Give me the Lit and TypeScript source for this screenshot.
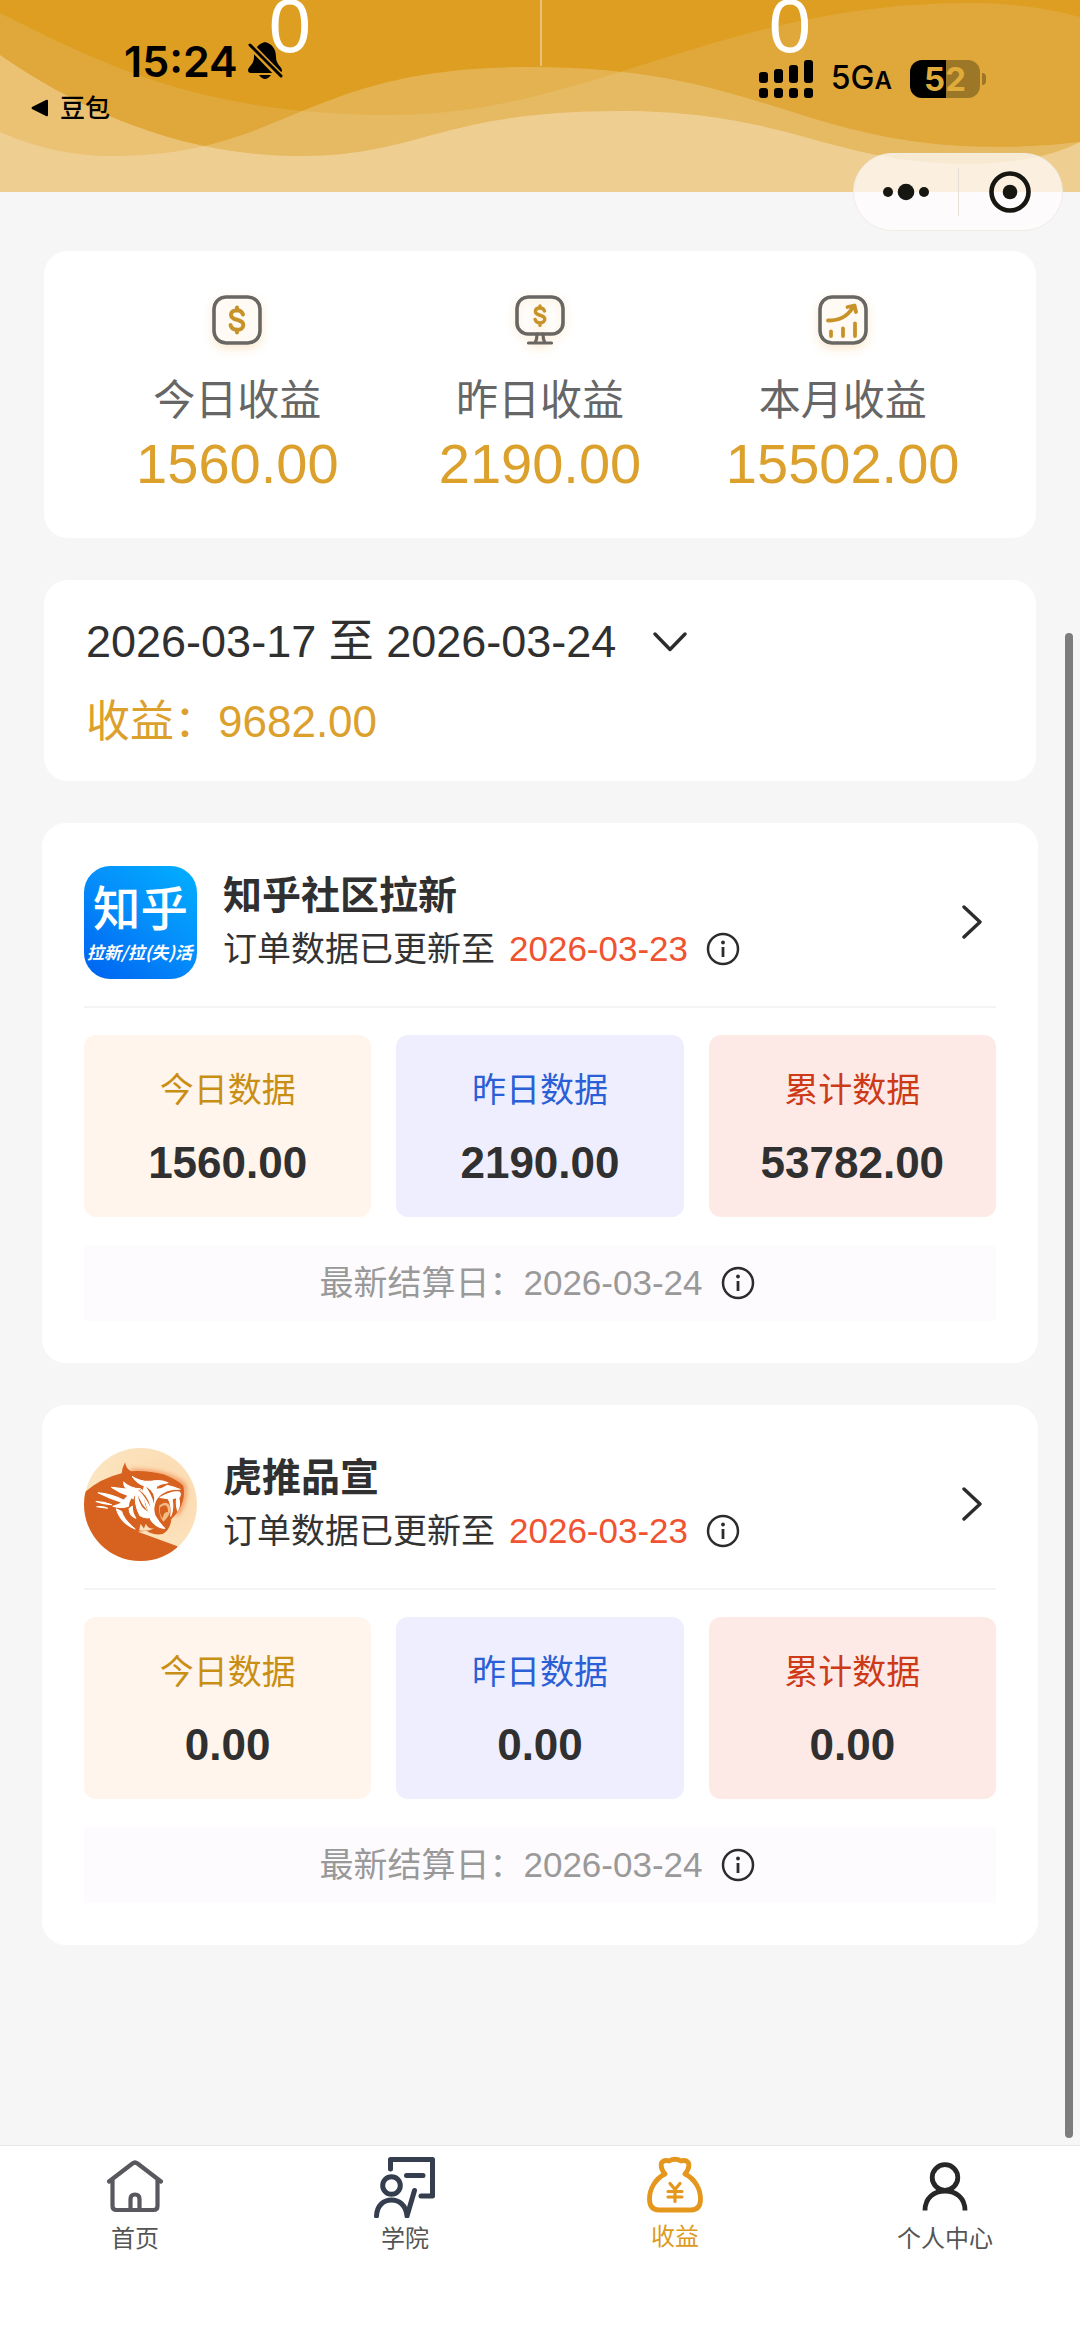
import { LitElement, html, svg, css } from "lit";
import { customElement, property } from "lit/decorators.js";

interface Project {
  name: string;
  logo: "zhihu" | "tiger";
  updated: string;
  settled: string;
  today: string;
  yesterday: string;
  total: string;
}

const projects: Project[] = [
  { name: "知乎社区拉新", logo: "zhihu", updated: "2026-03-23", settled: "2026-03-24", today: "1560.00", yesterday: "2190.00", total: "53782.00" },
  { name: "虎推品宣", logo: "tiger", updated: "2026-03-23", settled: "2026-03-24", today: "0.00", yesterday: "0.00", total: "0.00" },
];

const dollarSquare = html`<svg width="50" height="50" viewBox="0 0 50 50" fill="none" stroke-linecap="round" stroke-linejoin="round" aria-hidden="true">
  <rect x="2" y="2" width="46" height="46" rx="12" stroke="#696763" stroke-width="3.6" />
  <path d="M31 19.5c-1-3-3.200-4.300-6-4.300-3.400 0-6 1.700-6 4.700 0 6.600 12.300 3.200 12.300 10 0 3.200-2.900 4.900-6.300 4.900-3.300 0-5.700-1.600-6.500-4.700M25 12.500v3M25 34.500v3" stroke="#c8922a" stroke-width="4" />
</svg>`;

const dollarScreen = html`<svg width="50" height="50" viewBox="0 0 50 50" fill="none" stroke-linecap="round" stroke-linejoin="round" aria-hidden="true">
  <rect x="2" y="2" width="46" height="37" rx="11" stroke="#696763" stroke-width="3.600" />
  <path d="M22 39Q22 44 20.500 47M28 39Q28 44 29.500 47M13.500 48h23" stroke="#696763" stroke-width="3.200" />
  <path d="M29.500 16c-.7-2-2.300-3-4.500-3-2.700 0-4.600 1.300-4.600 3.500 0 5 9.400 2.500 9.400 7.600 0 2.400-2.200 3.800-4.800 3.800-2.500 0-4.300-1.200-4.900-3.500M25 11v2M25 28v2.400" stroke="#c8922a" stroke-width="3.400" />
</svg>`;

const trendSquare = html`<svg width="50" height="50" viewBox="0 0 50 50" fill="none" stroke-linecap="round" stroke-linejoin="round" aria-hidden="true">
  <rect x="2" y="2" width="46" height="46" rx="12" stroke="#696763" stroke-width="3.600" />
  <path d="M10 25.500c12 0 19-4 25-13M29.500 12l7-1.500 1.500 6.500M13 36.500v4.500M25 33.500v7.500M37 28.500v12.500" stroke="#c8922a" stroke-width="3.800" />
</svg>`;

const infoIcon = html`<svg width="34" height="34" viewBox="0 0 34 34" fill="none" aria-hidden="true">
  <circle cx="17" cy="17" r="15" stroke="#2c2c2c" stroke-width="2.500" />
  <circle cx="17" cy="10.500" r="1.900" fill="#2c2c2c" />
  <path d="M17 15v10" stroke="#2c2c2c" stroke-width="2.800" />
</svg>`;

const zhihuLogo = html`<svg class="logo" viewBox="0 0 112 112" role="img" aria-label="知乎">
  <defs>
    <linearGradient id="zh" x1="1" y1="0" x2="0.200" y2="1">
      <stop offset="0" stop-color="#00b0ff" />
      <stop offset="0.500" stop-color="#058ffb" />
      <stop offset="1" stop-color="#0069f2" />
    </linearGradient>
  </defs>
  <rect width="112" height="112" rx="26" fill="url(#zh)" />
  <g fill="#fff" text-anchor="middle" font-family="'Noto Sans CJK SC', sans-serif">
    <text x="56" y="59" font-size="47" font-weight="500">知乎</text>
    <text x="55" y="92" font-size="17" font-weight="700" font-style="italic">拉新/拉(失)活</text>
  </g>
</svg>`;

const tigerLogo = html`<svg class="logo" viewBox="72 81 336 336" role="img" aria-label="虎推">
  <defs>
    <radialGradient id="sky" cx="0.700" cy="0.400" r="0.650">
      <stop offset="0" stop-color="#fcd9ae" />
      <stop offset="1" stop-color="#fbe5c0" />
    </radialGradient>
    <filter id="glow" x="-20%" y="-20%" width="140%" height="140%"><feGaussianBlur stdDeviation="8" /></filter>
    <clipPath id="disc"><circle cx="240" cy="249" r="168" /></clipPath>
  </defs>
  <g clip-path="url(#disc)">
    <rect x="72" y="81" width="336" height="336" fill="url(#sky)" />
    <path d="M210 152Q270 150 320 165Q360 178 370 195Q374 240 345 280" fill="none" stroke="#ef7a3c" stroke-width="10" filter="url(#glow)" />
    <path fill="#d7611f" d="M60 225Q115 172 184 156Q186 138 194 123Q197 142 212 150Q262 147 310 160Q350 176 367 193Q372 215 366 238Q358 268 332 292Q328 325 306 337Q280 342 258 327L232 330L350 373L330 430H60Z" />
    <g fill="#fff" stroke="#fff" stroke-width="3" stroke-linejoin="round">
      <path d="M216 166Q240 182 272 180Q296 174 322 184Q302 186 286 196Q304 202 318 192Q338 196 358 204Q330 202 312 212Q292 222 284 240Q276 262 283 282Q294 302 312 320Q286 318 270 294Q262 262 252 232Q244 208 252 194Q232 188 216 166Z" />
      <path d="M190 182Q206 200 240 202Q222 214 218 232Q206 222 158 200Q180 200 204 208Q190 198 190 182Z" />
      <path d="M114 214Q150 216 190 236L204 222Q176 214 154 198Q188 202 232 208Q206 228 204 254Q184 262 158 254Q178 250 184 242Q150 232 114 214Z" />
      <path d="M226 216Q220 248 238 282Q252 292 270 288Q258 268 252 248Q250 222 244 204Z" />
      <path d="M206 262Q206 282 226 290Q214 272 216 254ZM168 262Q180 304 224 322Q190 294 184 270Z" />
      <path d="M108 240Q130 240 154 250Q128 248 108 240ZM110 256Q128 252 142 260Q126 258 110 256Z" />
      <path d="M298 228Q334 208 356 212Q362 218 354 230Q360 252 350 268Q344 244 348 230Q340 228 334 234Q340 262 330 284Q334 250 322 232Z" />
    </g>
    <path d="M290 196Q302 188 318 192Q304 202 288 202Z" fill="#d7611f" />
    <path d="M232 204Q262 220 270 258Q252 222 232 204ZM256 196Q286 212 280 246Q272 216 256 196ZM232 222Q244 250 262 270Q238 258 232 222Z" fill="#d7611f" />
    <path d="M296 252Q322 232 330 262Q326 286 308 300Q292 280 296 252Z" fill="#f3bd86" />
    <path d="M298 258Q322 240 322 272Q310 268 306 290Q294 276 298 258Z" fill="#d7611f" />
    <path d="M240 306L250 320L256 306Q264 324 280 320Q264 330 236 326Z" fill="#fbe0bb" />
  </g>
</svg>`;

const waves = svg`
  <path d="M0 13C100 63 200 115 390 115C590 115 720 3 970 3Q1030 3 1080 17V192H0Z" fill="#fff" fill-opacity="0.110" />
  <path d="M0 55C80 110 180 156 300 156C420 156 440 111 620 111C790 111 830 164 970 164Q1040 163 1080 142V192H0Z" fill="#ffeedb" fill-opacity="0.360" />
  <path d="M0 132Q55 156 110 156C290 156 300 67 530 67C760 67 800 147 1000 147Q1040 147 1080 142V192H0Z" fill="#fff" fill-opacity="0.210" />`;

const tabs = [
  {
    label: "首页",
    active: false,
    icon: html`<svg width="62" height="62" viewBox="0 0 62 62" fill="none" stroke="#58585e" stroke-width="4.200" stroke-linecap="round" stroke-linejoin="round" aria-hidden="true">
      <path d="M5 25.500 28.500 7.500Q31 5.500 33.500 7.500L57 25.500M8.500 24v26Q8.500 54 12.500 54h37Q53.500 54 53.500 50V24M26.500 53V43Q26.500 38.500 31 38.500T35.500 43v10" />
    </svg>`,
  },
  {
    label: "学院",
    active: false,
    icon: html`<svg width="62" height="62" viewBox="0 0 62 62" fill="none" stroke="#353e4f" stroke-width="5" stroke-linecap="round" stroke-linejoin="round" aria-hidden="true">
      <path d="M16.500 13V3.500H58.500V40H47M32.500 19.500H49M2.500 60C3 49 10 44 17.500 44S32 49 33 60L40.500 34.500" />
      <circle cx="17.500" cy="29.500" r="8.800" />
    </svg>`,
  },
  {
    label: "收益",
    active: true,
    icon: html`<svg width="62" height="62" viewBox="0 0 62 62" fill="none" stroke="#e5961d" stroke-width="4.800" stroke-linecap="round" stroke-linejoin="round" aria-hidden="true">
      <path d="M21 18Q16 12 17.500 7Q20 3.500 25 5Q31 1.500 37 5Q42 3.500 44.500 7Q46 12 41 18M21 18C11 23 5.500 33 5.500 43Q5.500 54 15 54H47Q56.500 54 56.500 43C56.500 33 51 23 41 18" />
      <path d="M26 27.500l5 6 5-6M24 35.500h14M24 41h14M31 34v11.500" stroke-width="3.200" />
    </svg>`,
  },
  {
    label: "个人中心",
    active: false,
    icon: html`<svg width="62" height="62" viewBox="0 0 62 62" fill="none" stroke="#272727" stroke-width="4.800" aria-hidden="true">
      <circle cx="31" cy="21.500" r="12.800" />
      <path d="M11 54.500C11 42 20 35 31 35S51 42 51 54.500" />
    </svg>`,
  },
];

@customElement("status-bar")
class StatusBar extends LitElement {
  static styles = css`
    :host { display: flex; justify-content: space-between; align-items: flex-start; padding: 36px 94px 0 31px; color: #000; font-family: Inter, "Noto Sans CJK SC", sans-serif; }
    .left { display: flex; flex-direction: column; gap: 10px; }
    .clock { display: flex; align-items: center; gap: 10px; padding-left: 93px; font-size: 43px; line-height: 50px; font-weight: 600; }
    .back { display: flex; align-items: center; gap: 11px; font-size: 25px; line-height: 24px; font-weight: 500; color: inherit; text-decoration: none; }
    .right { display: flex; align-items: center; gap: 18px; padding-top: 24px; height: 38px; }
    .net { font-size: 32px; line-height: 42px; font-weight: 500; }
    .net small { font-size: 24px; font-weight: 600; }
    .battery { display: flex; align-items: center; gap: 2px; }
    .cell { width: 70px; height: 38px; line-height: 38px; border-radius: 12px; text-align: center; font-size: 33px; font-weight: 700; color: #dfab3a; background: linear-gradient(90deg, #000 36px, #9c7728 36px); }
    .nub { width: 4px; height: 12px; border-radius: 0 6px 6px 0; background: #9c7728; }
  `;
  render() {
    return html`
      <div class="left">
        <div class="clock"><span>15:24</span>
          <svg width="36" height="38" viewBox="0 0 36 38" aria-hidden="true">
            <path d="M17 0C9 2 6 8 6 15 6 22 1 24 0 28c0 2 1 3 3 3h28c2 0 3-1 3-3-1-4-6-6-6-13C28 8 25 2 17 0ZM11 33Q17 41 23 33Z" />
            <path d="M1 2 34 36" stroke="#dd9e22" stroke-width="7" />
            <path d="M2 3 33 34" stroke="#000" stroke-width="3" stroke-linecap="round" />
          </svg>
        </div>
        <a class="back" href="#back"><svg width="18" height="18" viewBox="0 0 18 18" aria-hidden="true"><path d="M1 8 15 1Q17 0 17 2V16Q17 18 15 17L1 10Q0 9 1 8Z" /></svg>豆包</a>
      </div>
      <div class="right">
        <svg width="54" height="38" viewBox="0 0 54 38" aria-label="信号" role="img">
          <g><rect y="12" width="9" height="11" rx="3" /><rect x="15" y="9" width="9" height="14" rx="3" /><rect x="30" y="5" width="9" height="18" rx="3" /><rect x="45" width="9" height="23" rx="3" />
          <rect y="28" width="9" height="10" rx="3" /><rect x="15" y="28" width="9" height="10" rx="3" /><rect x="30" y="28" width="9" height="10" rx="3" /><rect x="45" y="28" width="9" height="10" rx="3" /></g>
        </svg>
        <span class="net">5G<small>A</small></span>
        <div class="battery"><span class="cell">52</span><span class="nub"></span></div>
      </div>`;
  }
}

@customElement("project-card")
class ProjectCard extends LitElement {
  @property({ attribute: false }) project!: Project;
  static styles = css`
    :host { display: block; padding: 42px; border-radius: 24px; background: #fff; }
    button { display: flex; padding: 0; border: 0; background: none; cursor: pointer; }
    .head { display: flex; align-items: center; padding-bottom: 27px; border-bottom: 2px solid #f4f4f4; }
    .logo { display: block; width: 113px; height: 113px; margin-right: 26px; }
    .info { flex: 1; min-width: 0; }
    h2 { margin: 0; font-size: 39px; line-height: 54px; font-weight: 700; font-family: "Noto Sans CJK SC", sans-serif; color: #303030; }
    .sub { display: flex; align-items: center; margin: 0; font-size: 34px; line-height: 60px; color: #333; }
    .date { font-size: 35px; }
    .sub .date { margin: 0 18px 0 14px; color: #f0532f; }
    .go { display: flex; padding: 0 14px; }
    .stats { display: grid; grid-template-columns: repeat(3, 1fr); gap: 25px; margin: 27px 0 28px; }
    .stat { display: flex; flex-direction: column; align-items: center; gap: 22px; padding: 30px 0 29px; border-radius: 12px; }
    .stat dt { font-size: 34px; line-height: 50px; }
    .stat dd { margin: 0; font-size: 44px; line-height: 51px; font-weight: 700; color: #303030; }
    .today { background: #fff5ec; } .today dt { color: #c98f14; }
    .yesterday { background: #efeeff; } .yesterday dt { color: #2a5fd6; }
    .total { background: #fdeae6; } .total dt { color: #cd3a17; }
    .settle { display: flex; align-items: center; justify-content: center; padding-right: 6px; font-size: 34px; line-height: 76px; color: #999; background: #fefbfe; }
    .settle .date { margin-right: 18px; }
  `;
  render() {
    const p = this.project;
    return html`
      <div class="head">
        ${p.logo === "zhihu" ? zhihuLogo : tigerLogo}
        <div class="info">
          <h2>${p.name}</h2>
          <p class="sub">订单数据已更新至<span class="date">${p.updated}</span><button aria-label="更新说明">${infoIcon}</button></p>
        </div>
        <a class="go" href="#detail" aria-label="查看详情"><svg width="20" height="34" viewBox="0 0 20 34" fill="none" stroke="#2c2c2c" stroke-width="3.400" stroke-linecap="round" stroke-linejoin="round" aria-hidden="true"><path d="M2 2 18 17 2 32" /></svg></a>
      </div>
      <dl class="stats">
        <div class="stat today"><dt>今日数据</dt><dd>${p.today}</dd></div>
        <div class="stat yesterday"><dt>昨日数据</dt><dd>${p.yesterday}</dd></div>
        <div class="stat total"><dt>累计数据</dt><dd>${p.total}</dd></div>
      </dl>
      <div class="settle">最新结算日：<span class="date">${p.settled}</span><button aria-label="结算说明">${infoIcon}</button></div>`;
  }
}

@customElement("app-root")
class AppRoot extends LitElement {
  static styles = css`
    :host { display: flex; flex-direction: column; position: relative; min-height: 100vh; background: #f6f6f6; font-family: "Liberation Sans", "Noto Sans CJK SC", sans-serif; }
    button { padding: 0; border: 0; background: none; font: inherit; color: inherit; cursor: pointer; }
    .hero { display: grid; grid-template-columns: 1fr 1fr; grid-template-rows: 192px; padding: 0 40px; overflow: hidden; position: relative; background: #dd9e22; }
    .waves { position: absolute; inset: 0; width: 100%; height: 100%; }
    .count { position: relative; text-align: center; font-size: 76px; line-height: 52px; color: #fff; }
    .rule { position: absolute; left: 50%; top: 0; width: 2px; height: 66px; background: #ebc179; }
    status-bar { position: absolute; inset: 0 0 auto 0; }
    .capsule { position: absolute; top: 153px; right: 17px; display: flex; align-items: center; width: 208px; height: 76px; border: 1px solid #f3ece6; border-radius: 40px; background: rgba(255, 252, 253, 0.720); }
    .capsule button { flex: 1; display: flex; justify-content: center; }
    .capsule i { width: 1px; height: 48px; background: #e6dfd8; }
    main { flex: 1; display: flex; flex-direction: column; gap: 42px; padding: 59px 42px 42px; }
    .card { margin: 0 2px; border-radius: 24px; background: #fff; }
    .summary { display: grid; grid-template-columns: repeat(3, 1fr); padding: 44px 42px 42px; }
    .metric { display: flex; flex-direction: column; align-items: center; }
    .metric svg { border-radius: 14px; background: #fffaf3; box-shadow: 0 4px 10px rgba(238, 170, 70, 0.250); }
    .plain { display: flex; filter: drop-shadow(0 3px 5px rgba(238, 170, 70, 0.300)); }
    .metric .plain svg { background: none; box-shadow: none; }
    .label { margin-top: 28px; font-size: 42px; line-height: 56px; color: #666; }
    .value { margin-top: 3px; font-size: 56px; line-height: 64px; color: #dca02c; }
    .range { padding: 32px 42px 29px; font-size: 45px; line-height: 60px; }
    .range button { display: flex; align-items: center; gap: 37px; color: #303030; }
    .range p { margin: 20px 0 0; font-size: 44px; color: #dca02c; }
    .thumb { position: absolute; right: 7px; top: 633px; bottom: 209px; width: 8px; border-radius: 4px; background: #7d7d7d; }
    nav { display: grid; grid-template-columns: repeat(4, 1fr); padding: 10px 0 91px; border-top: 1px solid #e4e8e6; background: #fff; }
    .tab { display: flex; flex-direction: column; align-items: center; gap: 4px; padding: 0; font-size: 24px; line-height: 34px; color: #555; text-decoration: none; }
    .tab.active { color: #dc9a22; gap: 2px; }
  `;

  render() {
    return html`
      <header class="hero">
        <svg class="waves" viewBox="0 0 1080 192" preserveAspectRatio="none" aria-hidden="true">${waves}</svg>
        <span class="count">0</span><span class="count">0</span>
        <span class="rule"></span>
      </header>
      <status-bar></status-bar>
      <div class="capsule">
        <button aria-label="更多"><svg width="46" height="18" viewBox="0 0 46 18" fill="#171712" aria-hidden="true"><circle cx="5" cy="9" r="5" /><circle cx="23" cy="9" r="8.300" /><circle cx="41" cy="9" r="5" /></svg></button>
        <i></i>
        <button aria-label="关闭"><svg width="42" height="42" viewBox="0 0 42 42" aria-hidden="true"><circle cx="21" cy="21" r="18.500" fill="none" stroke="#171712" stroke-width="4.600" /><circle cx="21" cy="21" r="7.300" fill="#171712" /></svg></button>
      </div>
      <main>
        <section class="card summary">
          <div class="metric">${dollarSquare}<span class="label">今日收益</span><span class="value">1560.00</span></div>
          <div class="metric"><span class="plain">${dollarScreen}</span><span class="label">昨日收益</span><span class="value">2190.00</span></div>
          <div class="metric">${trendSquare}<span class="label">本月收益</span><span class="value">15502.00</span></div>
        </section>
        <section class="card range">
          <button>2026-03-17 至 2026-03-24
            <svg width="34" height="20" viewBox="0 0 34 20" fill="none" stroke="#2c2c2c" stroke-width="3.400" stroke-linecap="round" stroke-linejoin="round" aria-hidden="true"><path d="M2 2 17 17.500 32 2" /></svg>
          </button>
          <p>收益：9682.00</p>
        </section>
        ${projects.map((p) => html`<project-card .project=${p}></project-card>`)}
      </main>
      <nav>
        ${tabs.map((t) => html`<a class="tab ${t.active ? "active" : ""}" href="#${t.label}">${t.icon}<span>${t.label}</span></a>`)}
      </nav>
      <span class="thumb"></span>`;
  }
}
